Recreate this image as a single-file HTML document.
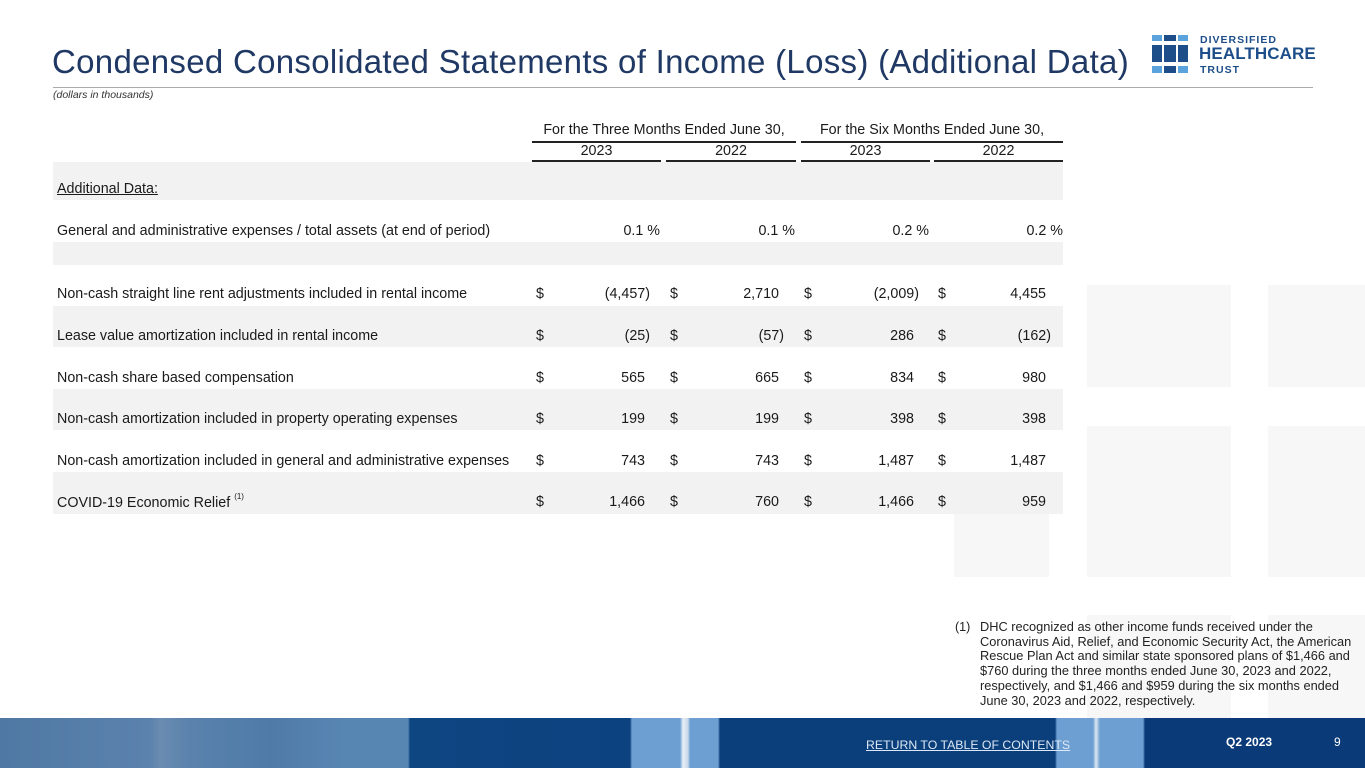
<!DOCTYPE html>
<html><head><meta charset="utf-8"><style>
*{margin:0;padding:0;box-sizing:border-box}
body{width:1365px;height:768px;position:relative;background:#fff;font-family:"Liberation Sans",sans-serif;color:#1a1a1a;overflow:hidden}
.a{position:absolute;white-space:nowrap}
.sq{position:absolute;background:#f7f7f7}
.band{position:absolute;left:53px;width:1010px;background:#f2f2f2}
.t{font-size:14.3px}
.r{text-align:right}
.ul{position:absolute;height:1.5px;background:#222}
</style></head><body>
<div class="sq" style="left:1087px;top:285px;width:144px;height:102px"></div>
<div class="sq" style="left:1268px;top:285px;width:97px;height:102px"></div>
<div class="sq" style="left:1087px;top:426px;width:144px;height:151px"></div>
<div class="sq" style="left:1268px;top:426px;width:97px;height:151px"></div>
<div class="sq" style="left:954px;top:514px;width:95px;height:63px"></div>
<div class="sq" style="left:1087px;top:615px;width:144px;height:103px"></div>
<div class="sq" style="left:1268px;top:615px;width:97px;height:103px"></div>

<div class="a" style="left:52px;top:43px;font-size:33px;color:#1f3864;letter-spacing:0.3px">Condensed Consolidated Statements of Income (Loss) (Additional Data)</div>
<div class="a" style="left:53px;top:89px;font-size:10.5px;font-style:italic;color:#333">(dollars in thousands)</div>
<div style="position:absolute;left:53px;top:87px;width:1260px;height:1px;background:#aaa"></div>

<svg style="position:absolute;left:1152px;top:35px" width="50" height="40">
<rect x="0" y="0" width="10" height="6" fill="#5ba3dc"/><rect x="12" y="0" width="12" height="6" fill="#1d4e89"/><rect x="26" y="0" width="10" height="6" fill="#5ba3dc"/>
<rect x="0" y="10" width="10" height="17" fill="#1d4e89"/><rect x="12" y="10" width="12" height="17" fill="#1d4e89"/><rect x="26" y="10" width="10" height="17" fill="#1d4e89"/>
<rect x="0" y="31" width="10" height="7" fill="#5ba3dc"/><rect x="12" y="31" width="12" height="7" fill="#1d4e89"/><rect x="26" y="31" width="10" height="7" fill="#5ba3dc"/>
</svg>
<div class="a" style="left:1200px;top:34px;font-size:10.5px;font-weight:bold;color:#1d4e89;letter-spacing:1px">DIVERSIFIED</div>
<div class="a" style="left:1199px;top:44px;font-size:17px;font-weight:bold;color:#1d4e89;letter-spacing:0.1px">HEALTHCARE</div>
<div class="a" style="left:1200px;top:64px;font-size:10.5px;font-weight:bold;color:#1d4e89;letter-spacing:1px">TRUST</div>

<div class="a t" style="left:532px;width:264px;top:122px;text-align:center">For the Three Months Ended June 30,</div>
<div class="a t" style="left:801px;width:262px;top:122px;text-align:center">For the Six Months Ended June 30,</div>
<div class="ul" style="left:532px;width:264px;top:141px"></div>
<div class="ul" style="left:801px;width:262px;top:141px"></div>
<div class="a t" style="left:532px;width:129px;top:143px;text-align:center">2023</div>
<div class="a t" style="left:666px;width:130px;top:143px;text-align:center">2022</div>
<div class="a t" style="left:801px;width:129px;top:143px;text-align:center">2023</div>
<div class="a t" style="left:934px;width:129px;top:143px;text-align:center">2022</div>
<div class="ul" style="left:532px;width:129px;top:160px"></div>
<div class="ul" style="left:666px;width:130px;top:160px"></div>
<div class="ul" style="left:801px;width:129px;top:160px"></div>
<div class="ul" style="left:934px;width:129px;top:160px"></div>

<div class="band" style="top:162px;height:38px"></div>
<div class="band" style="top:242px;height:23px"></div>
<div class="band" style="top:306px;height:41px"></div>
<div class="band" style="top:389px;height:41px"></div>
<div class="band" style="top:472px;height:42px"></div>

<div class="a t" style="left:57px;top:181px;text-decoration:underline">Additional Data:</div>
<div class="a t" style="left:57px;top:223px">General and administrative expenses / total assets (at end of period)</div>
<div class="a t r" style="right:705px;top:223px">0.1 %</div>
<div class="a t r" style="right:570px;top:223px">0.1 %</div>
<div class="a t r" style="right:436px;top:223px">0.2 %</div>
<div class="a t r" style="right:302px;top:223px">0.2 %</div>

<div id="rows"></div>
<script>
var rows=[
["Non-cash straight line rent adjustments included in rental income",286,["(4,457)","2,710","(2,009)","4,455"]],
["Lease value amortization included in rental income",328,["(25)","(57)","286","(162)"]],
["Non-cash share based compensation",370,["565","665","834","980"]],
["Non-cash amortization included in property operating expenses",411,["199","199","398","398"]],
["Non-cash amortization included in general and administrative expenses",453,["743","743","1,487","1,487"]],
["COVID-19 Economic Relief <sup style='font-size:8px;position:relative;top:-2px'>(1)</sup>",494,["1,466","760","1,466","959"]]];
var dx=[536,670,804,938],rx=[645,779,914,1046],h="";
rows.forEach(function(r){
h+='<div class="a t" style="left:57px;top:'+r[1]+'px">'+r[0]+'</div>';
r[2].forEach(function(v,i){
var pr=v.charAt(0)=="("?5:0;
h+='<div class="a t" style="left:'+dx[i]+'px;top:'+r[1]+'px">$</div>';
h+='<div class="a t r" style="right:'+(1365-rx[i]-pr)+'px;top:'+r[1]+'px">'+v+'</div>';});});
document.getElementById("rows").innerHTML=h;
</script>

<div class="a" style="left:955px;top:620px;font-size:12.5px;line-height:14.7px;color:#222">(1)</div>
<div class="a" style="left:980px;top:620px;font-size:12.8px;line-height:14.7px;color:#222">DHC recognized as other income funds received under the<br>Coronavirus Aid, Relief, and Economic Security Act, the American<br>Rescue Plan Act and similar state sponsored plans of $1,466 and<br>$760 during the three months ended June 30, 2023 and 2022,<br>respectively, and $1,466 and $959 during the six months ended<br>June 30, 2023 and 2022, respectively.</div>

<div style="position:absolute;left:0;top:718px;width:1365px;height:50px;background:linear-gradient(90deg,#4f78a3 0,#5a82ad 150px,#6a8cb0 160px,#5a82ad 190px,#4f7aa8 270px,#5886b3 345px,#5886b3 408px,#0e4682 410px,#0c427f 630px,#6d9fd3 632px,#6d9fd3 680px,#e8eef5 683px,#c8d8ea 688px,#6d9fd3 690px,#6d9fd3 718px,#0b3f7c 720px,#0b3f7c 1055px,#6d9fd3 1057px,#6d9fd3 1093px,#dfe8f2 1096px,#6d9fd3 1100px,#6d9fd3 1143px,#0a3a78 1145px,#0a3a78 1365px)"></div>
<div class="a" style="left:866px;top:738px;font-size:12.3px;color:#dce8f5;text-decoration:underline">RETURN TO TABLE OF CONTENTS</div>
<div class="a" style="left:1226px;top:735px;font-size:12px;font-weight:bold;color:#fff">Q2 2023</div>
<div class="a" style="left:1334px;top:735px;font-size:12px;color:#fff">9</div>
</body></html>
